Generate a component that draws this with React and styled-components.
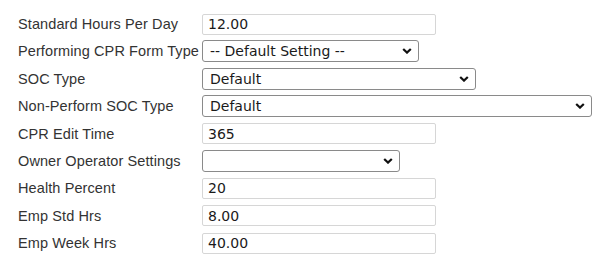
import React from "react";
import styled, { createGlobalStyle } from "styled-components";

const GlobalStyle = createGlobalStyle`
  html, body {
    margin: 0;
    padding: 0;
    background: #ffffff;
  }
`;

const Form = styled.div`
  display: grid;
  grid-template-columns: 184px auto;
  row-gap: 5.4px;
  padding: 13px 0 0 18px;
  font-family: "Liberation Sans", Arial, sans-serif;
`;

const Label = styled.label`
  display: flex;
  align-items: center;
  height: 22px;
  font-size: 14.5px;
  color: #333;
  white-space: nowrap;
  letter-spacing: 0.1px;
`;

const Field = styled.div`
  height: 22px;
  display: flex;
  align-items: center;
`;

const TextInput = styled.input`
  box-sizing: border-box;
  width: 234px;
  height: 21px;
  margin: 0;
  padding: 0 5px;
  border: 1px solid #d6d6d6;
  border-radius: 2px;
  background: #fff;
  font-family: "DejaVu Sans", Verdana, sans-serif;
  font-size: 14px;
  color: #1a1a1a;
  outline: none;
`;

const SelectWrap = styled.div`
  position: relative;
  width: ${(p) => p.$w}px;
  height: 22px;
`;

const Select = styled.select`
  box-sizing: border-box;
  width: 100%;
  height: 22px;
  margin: 0;
  padding: 0 20px 0 7px;
  border: 1px solid #8a8a8a;
  border-radius: 3px;
  background: #fff;
  appearance: none;
  font-family: "DejaVu Sans", Verdana, sans-serif;
  font-size: 14px;
  color: #1a1a1a;
  outline: none;
`;

const Chevron = styled.svg`
  position: absolute;
  right: 7px;
  top: 8px;
  width: 10px;
  height: 6px;
  pointer-events: none;
`;

const Dropdown = ({ w, value }) => (
  <SelectWrap $w={w}>
    <Select defaultValue={value}>
      <option value={value}>{value}</option>
    </Select>
    <Chevron viewBox="0 0 10 6">
      <path d="M1.2 1 L5 4.6 L8.8 1" fill="none" stroke="#111" strokeWidth="2.2" />
    </Chevron>
  </SelectWrap>
);

const rows = [
  { label: "Standard Hours Per Day", type: "input", value: "12.00" },
  { label: "Performing CPR Form Type", type: "select", value: "-- Default Setting --", w: 217 },
  { label: "SOC Type", type: "select", value: "Default", w: 274 },
  { label: "Non-Perform SOC Type", type: "select", value: "Default", w: 390 },
  { label: "CPR Edit Time", type: "input", value: "365" },
  { label: "Owner Operator Settings", type: "select", value: "", w: 198 },
  { label: "Health Percent", type: "input", value: "20" },
  { label: "Emp Std Hrs", type: "input", value: "8.00" },
  { label: "Emp Week Hrs", type: "input", value: "40.00" },
];

const App = () => {
  return (
    <>
      <GlobalStyle />
      <Form>
        {rows.map((r) => (
          <React.Fragment key={r.label}>
            <Label>{r.label}</Label>
            <Field>
              {r.type === "input" ? (
                <TextInput defaultValue={r.value} />
              ) : (
                <Dropdown w={r.w} value={r.value} />
              )}
            </Field>
          </React.Fragment>
        ))}
      </Form>
    </>
  );
};

export default App;
